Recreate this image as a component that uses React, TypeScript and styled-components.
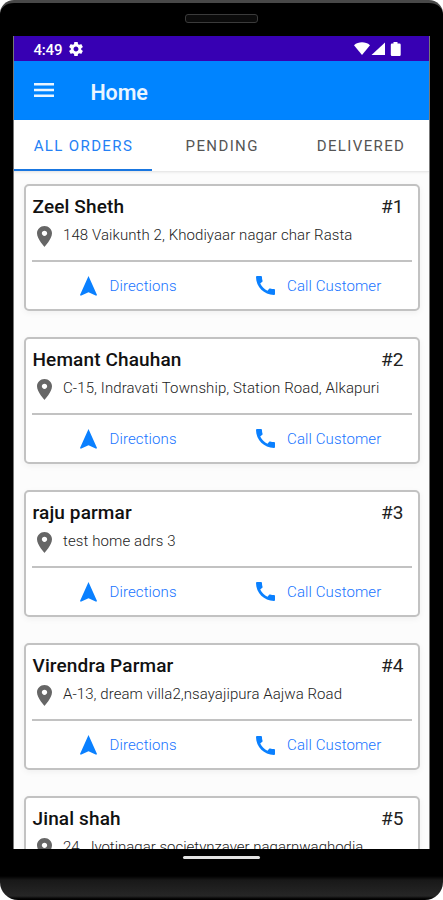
import React from "react";
import styled, { createGlobalStyle } from "styled-components";

const Global = createGlobalStyle`
  * { box-sizing: border-box; }
  body { margin: 0; background: #fff; font-family: Roboto, "Liberation Sans", sans-serif; }
`;

const Phone = styled.div`
  width: 443px;
  height: 900px;
  border-radius: 14px 14px 18px 18px;
  border-top: 3px solid #484848;
  background: linear-gradient(to bottom, #000 873px, #181818 877px, #222 888px, #262626 893px, #000 896px);
  display: flex;
  flex-direction: column;
  align-items: center;
  overflow: hidden;
`;

const Earpiece = styled.div`
  height: 33px;
  flex: none;
  display: flex;
  align-items: flex-start;
  padding-top: 11px;
  &::before {
    content: "";
    width: 71px;
    height: 7px;
    border: 1px solid #3b3b3b;
    border-radius: 3px;
    background: #0b0b0b;
  }
`;

const Screen = styled.main`
  width: 417px;
  height: 813px;
  margin-right: 1px;
  flex: none;
  display: flex;
  flex-direction: column;
  background: #fcfcfc;
  overflow: hidden;
  border-left: 1px solid #777;
  border-right: 1px solid #777;
`;

const StatusBar = styled.div`
  height: 25px;
  flex: none;
  display: flex;
  align-items: center;
  background: #3700b3;
  color: #fff;
  padding: 1px 27px 0 20px;
`;

const Clock = styled.span`
  font-size: 15px;
  font-weight: 500;
  letter-spacing: -0.2px;
  width: 35px;
  white-space: nowrap;
  padding-top: 1px;
`;

const StatusIcons = styled.div`
  margin-left: auto;
  display: flex;
  align-items: center;
  svg { display: block; }
`;

const AppBar = styled.header`
  height: 59px;
  flex: none;
  display: flex;
  align-items: center;
  gap: 37px;
  padding: 3px 0 0 20px;
  background: #0084ff;
  color: #eaf5ff;
`;

const MenuIcon = styled.svg`
  display: block;
  width: 20px;
  height: 14px;
  margin-bottom: 4px;
`;

const Title = styled.h1`
  margin: 2px 0 0;
  font-size: 21.5px;
  line-height: 26px;
  font-weight: 600;
  letter-spacing: -0.1px;
`;

const Tabs = styled.nav`
  height: 51.5px;
  flex: none;
  display: grid;
  grid-template-columns: repeat(3, 138.8px);
  background: #fff;
  border-bottom: 1px solid #e9e9e9;
  box-shadow: 0 1px 2px rgba(0, 0, 0, 0.06);
`;

const Tab = styled.div<{ $active?: boolean }>`
  display: flex;
  align-items: center;
  justify-content: center;
  padding-top: ${(p) => (p.$active ? 4 : 2)}px;
  padding-left: 1px;
  font-size: 15px;
  letter-spacing: 1.38px;
  white-space: nowrap;
  color: ${(p) => (p.$active ? "#2481f5" : "#555")};
  border-bottom: ${(p) => (p.$active ? "2px solid #1976e0" : "0")};
`;

const List = styled.div`
  display: flex;
  flex-direction: column;
  flex: none;
  gap: 25.8px;
  padding: 12px 9px 0 10px;
`;

const Card = styled.article`
  height: 127.4px;
  flex: none;
  background: #fff;
  border: 2px solid #c2c2c2;
  border-radius: 5px;
  padding: 0 6px;
  box-shadow: 0 2px 6px rgba(0, 0, 0, 0.05);
`;

const CardHead = styled.div`
  height: 41px;
  display: flex;
  justify-content: space-between;
  align-items: center;
  padding: 1px 8px 0 1px;
`;

const Name = styled.h2`
  margin: 0;
  font-size: 19px;
  line-height: 24px;
  font-weight: 500;
  letter-spacing: 0.13px;
  color: #111;
`;

const Num = styled.span`
  font-size: 19px;
  line-height: 24px;
  color: #222;
`;

const Address = styled.div`
  height: 33px;
  display: flex;
  align-items: flex-start;
  white-space: nowrap;
`;

const AddressText = styled.span<{ $spacing: number }>`
  font-size: 15px;
  line-height: 18px;
  margin-top: -1px;
  font-weight: 300;
  letter-spacing: ${(p) => p.$spacing}px;
  color: #222;
`;

const PinIcon = styled.svg`
  display: block;
  width: 15px;
  height: 21px;
  margin: -1px 11.5px 0 5px;
  flex: none;
`;

const Actions = styled.div`
  height: 49px;
  border-top: 2px solid #c2c2c2;
  display: grid;
  grid-template-columns: 224px 1fr;
  align-items: center;
`;

const Action = styled.div<{ $indent: number }>`
  display: flex;
  align-items: center;
  gap: 12.6px;
  padding-left: ${(p) => p.$indent}px;
  padding-top: 1px;
  font-size: 15px;
  font-weight: 300;
  letter-spacing: 0.1px;
  color: #1774ff;
  white-space: nowrap;
  svg { display: block; flex: none; }
`;

const GestureArea = styled.div`
  padding-top: 7px;
  &::before {
    content: "";
    display: block;
    width: 77px;
    height: 3px;
    border-radius: 2px;
    background: #e2e2e2;
  }
`;

const orders = [
  { name: "Zeel Sheth", address: "148 Vaikunth 2, Khodiyaar nagar char Rasta", spacing: 0.08 },
  { name: "Hemant Chauhan", address: "C-15, Indravati Township, Station Road, Alkapuri", spacing: 0.1 },
  { name: "raju parmar", address: "test home adrs 3", spacing: 0.1 },
  { name: "Virendra Parmar", address: "A-13, dream villa2,nsayajipura Aajwa Road", spacing: 0.07 },
  { name: "Jinal shah", address: "24, Jyotinagar societynzaver nagarnwaghodia", spacing: 0 },
];

export default function App() {
  return (
    <>
      <Global />
      <Phone>
        <Earpiece />
        <Screen>
          <StatusBar>
            <Clock>4:49</Clock>
            <svg width="14" height="14" viewBox="2 2 20 20" fill="#fff">
              <path d="M19.43 12.98c.04-.32.07-.64.07-.98s-.03-.66-.07-.98l2.11-1.65c.19-.15.24-.42.12-.64l-2-3.46c-.12-.22-.39-.3-.61-.22l-2.49 1c-.52-.4-1.08-.73-1.69-.98l-.38-2.65C14.46 2.18 14.25 2 14 2h-4c-.25 0-.46.18-.49.42l-.38 2.65c-.61.25-1.17.59-1.69.98l-2.49-1c-.23-.09-.49 0-.61.22l-2 3.46c-.13.22-.07.49.12.64l2.11 1.65c-.04.32-.07.65-.07.98s.03.66.07.98l-2.11 1.65c-.19.15-.24.42-.12.64l2 3.46c.12.22.39.3.61.22l2.49-1c.52.4 1.08.73 1.69.98l.38 2.65c.03.24.24.42.49.42h4c.25 0 .46-.18.49-.42l.38-2.65c.61-.25 1.17-.59 1.69-.98l2.49 1c.23.09.49 0 .61-.22l2-3.46c.12-.22.07-.49-.12-.64l-2.11-1.65zM12 15.5c-1.93 0-3.5-1.57-3.5-3.5s1.57-3.5 3.5-3.5 3.5 1.57 3.5 3.5-1.57 3.5-3.5 3.5z" />
            </svg>
            <StatusIcons>
              <svg width="48" height="16" viewBox="0 0 48 16" fill="#fff">
                <path d="M0 4.2C4.5.4 11.5.4 16 4.2L8 14z" />
                <path d="M31 1.500V14H17.500z" />
                <path d="M39.500 1h4v1.600h2q1.200 0 1.200 1.200v10q0 1.200-1.200 1.200h-7.500q-1.200 0-1.200-1.200v-10q0-1.200 1.200-1.200h1.500z" />
              </svg>
            </StatusIcons>
          </StatusBar>
          <AppBar>
            <MenuIcon viewBox="0 0 20 14" fill="currentColor">
              <path d="M0 0h20v2.400H0zM0 5.800h20v2.400H0zM0 11.600h20V14H0z" />
            </MenuIcon>
            <Title>Home</Title>
          </AppBar>
          <Tabs>
            <Tab $active>ALL ORDERS</Tab>
            <Tab>PENDING</Tab>
            <Tab>DELIVERED</Tab>
          </Tabs>
          <List>
            {orders.map((o, i) => (
              <Card key={o.name}>
                <CardHead>
                  <Name>{o.name}</Name>
                  <Num>#{i + 1}</Num>
                </CardHead>
                <Address>
                  <PinIcon viewBox="5 2 14 20" preserveAspectRatio="none" fill="#666">
                    <path d="M12 2C8.130 2 5 5.130 5 9c0 5.250 7 13 7 13s7-7.750 7-13c0-3.870-3.130-7-7-7zm0 9.500c-1.380 0-2.500-1.120-2.500-2.500s1.120-2.500 2.500-2.500 2.500 1.120 2.500 2.500-1.120 2.500-2.500 2.500z" />
                  </PinIcon>
                  <AddressText $spacing={o.spacing}>{o.address}</AddressText>
                </Address>
                <Actions>
                  <Action $indent={48.5}>
                    <svg width="17" height="20" viewBox="0 0 17 20" fill="#0a80ff">
                      <path d="M8.500 0L17 19l-.8.8-7.700-3.500L.8 19.800 0 19z" />
                    </svg>
                    Directions
                  </Action>
                  <Action $indent={0}>
                    <svg width="19" height="19" viewBox="3 3 18 18" fill="#0a80ff">
                      <path d="M20.010 15.380c-1.230 0-2.420-.2-3.530-.560-.350-.120-.740-.030-1.010.240l-1.570 1.970c-2.830-1.350-5.480-3.900-6.890-6.830l1.950-1.660c.270-.280.350-.670.240-1.020-.370-1.110-.560-2.300-.560-3.530 0-.540-.450-.990-.990-.990H4.190C3.650 3 3 3.240 3 3.990 3 13.280 10.730 21 20.010 21c.710 0 .990-.630.990-1.180v-3.450c0-.540-.450-.990-.990-.990z" />
                    </svg>
                    Call Customer
                  </Action>
                </Actions>
              </Card>
            ))}
          </List>
        </Screen>
        <GestureArea />
      </Phone>
    </>
  );
}
